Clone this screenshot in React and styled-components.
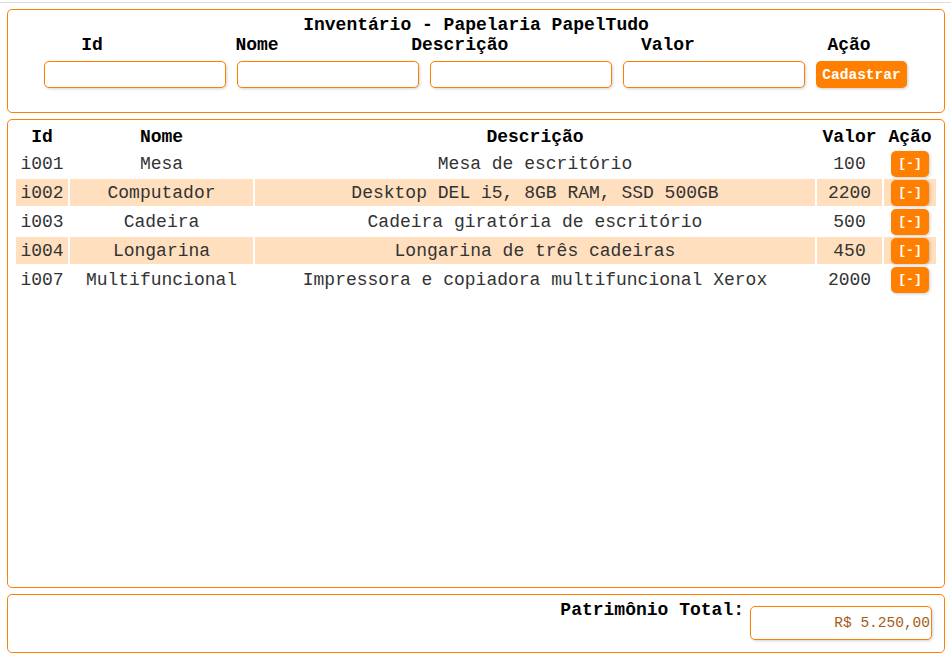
import React from 'react';
import styled, { createGlobalStyle } from 'styled-components';

const orange = 'rgb(255, 128, 0)';
const peach = 'rgb(255, 223, 190)';

const GlobalStyle = createGlobalStyle`
  body {
    margin: 0;
    background: #fff;
    font-family: 'Liberation Mono', 'Courier New', monospace;
  }
`;

const TopLine = styled.div`
  height: 2px;
  border-bottom: solid 1px rgb(221, 221, 221);
`;

const Page = styled.div`
  display: flex;
  flex-direction: column;
  gap: 6px;
  padding: 6px 6px 0 7px;
`;

const Box = styled.div`
  border: solid 1px ${orange};
  border-radius: 5px;
  box-sizing: border-box;
  height: ${(p) => p.h}px;
`;

const FormBox = styled(Box)`
  display: flex;
  flex-direction: column;
  padding: 5px 7px 0 7px;
`;

const Title = styled.div`
  text-align: center;
  font-size: 18px;
  font-weight: bold;
  line-height: 20px;
  color: #000;
`;

const LabelRow = styled.div`
  display: flex;
  justify-content: space-around;
  font-size: 18px;
  font-weight: bold;
  line-height: 20px;
  color: #000;
`;

const InputRow = styled.div`
  display: flex;
  justify-content: center;
  gap: 11px;
  margin-top: 6px;
  padding-right: 1px;
`;

const Input = styled.input`
  width: ${(p) => p.w || 182}px;
  height: ${(p) => p.ht || 27}px;
  box-sizing: border-box;
  border: solid 1px ${orange};
  border-radius: 5px;
  box-shadow: 1px 1px 3px rgba(0, 0, 0, 0.18);
  background: #fff;
  padding: 0 1px;
  font-family: 'Liberation Mono', 'Courier New', monospace;
  font-size: 14.5px;
  color: rgb(166, 92, 20);
  text-align: ${(p) => p.align || 'left'};
  outline: none;
`;

const Button = styled.button`
  width: ${(p) => p.w}px;
  height: ${(p) => p.ht}px;
  border: none;
  border-radius: 5px;
  background: ${orange};
  color: #fff;
  font-family: 'Liberation Mono', 'Courier New', monospace;
  font-weight: bold;
  font-size: ${(p) => p.fs}px;
  box-shadow: 1px 1px 3px rgba(0, 0, 0, 0.2);
  padding: 0;
  cursor: pointer;
`;

const ListBox = styled(Box)`
  padding: 4px 6px 0 6px;
`;

const Table = styled.table`
  width: 100%;
  border-spacing: 2px;
  table-layout: fixed;
  font-size: 18px;
`;

const Th = styled.th`
  height: 22px;
  padding: 0;
  font-weight: bold;
  color: #000;
  text-align: center;
  width: ${(p) => (p.w ? `${p.w}px` : 'auto')};
`;

const Td = styled.td`
  height: 27px;
  padding: 0;
  text-align: center;
  color: #333;
  white-space: nowrap;
  background: ${(p) => (p.shade ? peach : 'transparent')};
`;

const TotalBox = styled(Box)`
  display: flex;
  justify-content: flex-end;
  align-items: flex-start;
  gap: 6px;
  padding: 5px 12px 0 0;
`;

const TotalLabel = styled.div`
  font-size: 18px;
  font-weight: bold;
  line-height: 20px;
  color: #000;
`;

const TotalInput = styled(Input)`
  margin-top: 6px;
`;

const items = [
  { id: 'i001', nome: 'Mesa', desc: 'Mesa de escritório', valor: 100 },
  { id: 'i002', nome: 'Computador', desc: 'Desktop DEL i5, 8GB RAM, SSD 500GB', valor: 2200 },
  { id: 'i003', nome: 'Cadeira', desc: 'Cadeira giratória de escritório', valor: 500 },
  { id: 'i004', nome: 'Longarina', desc: 'Longarina de três cadeiras', valor: 450 },
  { id: 'i007', nome: 'Multifuncional', desc: 'Impressora e copiadora multifuncional Xerox', valor: 2000 },
];

export default function App() {
  return (
    <>
      <GlobalStyle />
      <TopLine />
      <Page>
        <FormBox h={104}>
          <Title>Inventário - Papelaria PapelTudo</Title>
          <LabelRow>
            <div>Id</div>
            <div>Nome</div>
            <div>Descrição</div>
            <div>Valor</div>
            <div>Ação</div>
          </LabelRow>
          <InputRow>
            <Input />
            <Input />
            <Input />
            <Input />
            <Button w={91} ht={27} fs={14.5}>Cadastrar</Button>
          </InputRow>
        </FormBox>
        <ListBox h={469}>
          <Table>
            <thead>
              <tr>
                <Th w={52}>Id</Th>
                <Th w={183}>Nome</Th>
                <Th>Descrição</Th>
                <Th w={65}>Valor</Th>
                <Th w={52}>Ação</Th>
              </tr>
            </thead>
            <tbody>
              {items.map((it, i) => {
                const shade = i % 2 === 1;
                return (
                  <tr key={it.id}>
                    <Td shade={shade}>{it.id}</Td>
                    <Td shade={shade}>{it.nome}</Td>
                    <Td shade={shade}>{it.desc}</Td>
                    <Td shade={shade}>{it.valor}</Td>
                    <Td shade={shade}>
                      <Button w={38} ht={26} fs={13}>[-]</Button>
                    </Td>
                  </tr>
                );
              })}
            </tbody>
          </Table>
        </ListBox>
        <TotalBox h={59}>
          <TotalLabel>Patrimônio Total:</TotalLabel>
          <TotalInput ht={34} align="right" readOnly value="R$ 5.250,00" />
        </TotalBox>
      </Page>
    </>
  );
}
